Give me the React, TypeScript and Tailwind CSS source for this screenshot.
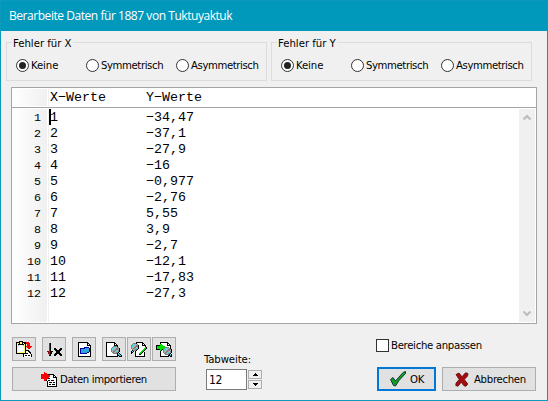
import React from "react";

const UI = "font-['DejaVu_Sans_Condensed','Noto_Sans',sans-serif] [font-stretch:condensed]";

const INK: Record<string, string> = {
  k: "#000000",
  w: "#ffffff",
  r: "#ff0000",
  d: "#a00000",
  y: "#ffff66",
  g: "#808080",
  s: "#b0b0b0",
  b: "#0000a0",
  c: "#2aa5dc",
  t: "#40e0e8",
  l: "#00e000",
};

function Pixels({ rows }: { rows: string[] }) {
  const w = Math.max(...rows.map((r) => r.length));
  return (
    <svg width={w} height={rows.length} viewBox={`0 0 ${w} ${rows.length}`} shapeRendering="crispEdges" className="block shrink-0">
      {rows.flatMap((row, y) =>
        [...row].map((ch, x) => (INK[ch] ? <rect key={`${x}-${y}`} x={x} y={y} width="1" height="1" fill={INK[ch]} /> : null))
      )}
    </svg>
  );
}

const PASTE = [
  "...kkkk.........",
  "kkkkyykkkkrrr...",
  "kyykyykykkrrrr..",
  "kykkkkkkyk.rrr..",
  "kyswwwwsyk.rrr..",
  "kywwwwwwykrrrrrr",
  "kywwwwwwyk.rrrr.",
  "kywwwwwwyk..rr..",
  "kywwwwwwyk......",
  "kywwwwwwykkkk...",
  "kywwwwwwykwwkk..",
  "kyyyyyyyykwwwkk.",
  "kkkkkkkkkkkkwwk.",
  ".......kwwwwwwwk",
  ".......kwkkwkkwk",
  ".......kwwwwwwwk",
];

const DELETE_ROWS = [
  "..rk...........",
  "..rk...........",
  "..rk...........",
  "..rk...........",
  "..rk...........",
  "..rk...kk....kk",
  "..rk...kkk..kkk",
  "..rk....kkkkkk.",
  "ddrkkk...kkkk..",
  ".drkk....kkkk..",
  ".drkk...kkkkkk.",
  "..rk...kkk..kkk",
  "..kk...kk....kk",
];

const OPEN = [
  "kkkkkkkkkk...",
  "kwwwwwwwwkk..",
  "kwwwwwwwwkwk.",
  "kwwwwwwwwkkkk",
  "kwwwwwwwwwwwk",
  "kwwwwwbbbbbwk",
  "kwbbbbbccccbk",
  "kwbccccccccbk",
  "kwbccccccccbk",
  "kwbccccccccbk",
  "kwbccccccbbwk",
  "kwbbbbbbbwwwk",
  "kwwwwwwwwwwwk",
  "kwwwwwwwwwwwk",
  "kkkkkkkkkkkkk",
];

const FIND = [
  "kkkkkkkkk.......",
  "kwwwwwwwkk......",
  "kwwwwwwwkwk.....",
  "kwwwwwwwkkkk....",
  "kwwwwwwggggk....",
  "kwwwwwgttssgg...",
  "kwwwwgttssgggk..",
  "kwwwwgtssgggsk..",
  "kwwwwgssggstgk..",
  "kwwwwgsggsttgk..",
  "kwwwwwggssggk...",
  "kwwwwwwggggktk..",
  "kwwwwwwwwwwkctk.",
  "kwwwwwwwwwwkkctk",
  "kkkkkkkkkkkk.kkk",
];

const REPLACE = [
  ".....kkkkkkk....",
  "..gggkwwwwwkk...",
  ".gttssgwwwwkwk..",
  "gttssggkwwwkkkk.",
  "gtssgggkwwwwwwk.",
  "gssggstkwwwwwwlk",
  "gsggsttkwwwwwllk",
  ".gssggkwwwwwllk.",
  ".kgggkwwwwwllk..",
  "ktk.kwwwwwllk...",
  "kk..kwwwwllkwk..",
  "k...kwwwllkwwk..",
  "....kwwwkkwwwk..",
  "....kwwwwwwwwk..",
  "....kkkkkkkkkk..",
];

const FIND_NEXT = [
  "....kkkkkkkk....",
  "....kwwwwwwkk...",
  "....llwwwwwkwk..",
  "kkkklllwwwwkkkk.",
  "kllllllllwwwwwk.",
  "kllllllllggggwk.",
  "klllllllgttssgk.",
  "kkkkllkgttssgggk",
  "....lkwgtssgggsk",
  "....kwwgssggstgk",
  "....kwwgsggsttgk",
  "....kwwwggssggk.",
  "....kwwwwggggktk",
  "....kwwwwwwwkkck",
  "....kkkkkkkkk.kk",
];

const IMPORT = [
  "...r............",
  "...rrr..........",
  "rrrrrrrkkkkkk...",
  "rrrrrrrrrwwwkk..",
  "rrrrrrrrrwwwkwk.",
  "rrrrrrrrwwwwkkkk",
  "rrrrrrrkkwwwwwwk",
  "...rrrwwwwwwwwwk",
  "...rrkwkkwkkkwwk",
  "......kwwwwwwwwk",
  "......kwkkkwkkwk",
  "......kwwwwwwwwk",
  "......kwkkwkkkwk",
  "......kwwwwwwwwk",
  "......kkkkkkkkkk",
];

function ToolButton({ rows, gap }: { rows: string[]; gap: string }) {
  return (
    <button className={`flex size-6 items-center justify-center border border-[#adadad] bg-[#e1e1e1] ${gap}`}>
      <Pixels rows={rows} />
    </button>
  );
}

function Radio({ label, checked, width, spacing }: { label: string; checked?: boolean; width: string; spacing: string }) {
  return (
    <label className={`flex h-4 items-center ${width}`}>
      <span className="flex size-[13px] shrink-0 items-center justify-center rounded-full border border-[#333] bg-white">
        {checked && <span className="size-[7px] rounded-full bg-[#222]" />}
      </span>
      <span className={`ml-[2px] whitespace-nowrap pt-[2px] leading-4 ${spacing}`}>{label}</span>
    </label>
  );
}

function ErrorGroup({ title }: { title: string }) {
  return (
    <fieldset className="h-[46px] w-[261px]">
      <div className="flex h-[39px] w-full flex-col border border-[#dcdcdc]">
        <legend className="-mt-[8px] ml-[5px] self-start whitespace-nowrap bg-[#f0f0f0] px-[1px] pt-px leading-4">{title}</legend>
        <div className="mt-[5px] flex pl-[9px]">
          <Radio label="Keine" checked width="w-[70px]" spacing="tracking-[-0.1px]" />
          <Radio label="Symmetrisch" width="w-[90px]" spacing="tracking-[-0.4px]" />
          <Radio label="Asymmetrisch" width="w-[84px]" spacing="tracking-[-0.4px]" />
        </div>
      </div>
    </fieldset>
  );
}

const VALUES = ["-34,47", "-37,1", "-27,9", "-16", "-0,977", "-2,76", "5,55", "3,9", "-2,7", "-12,1", "-17,83", "-27,3"];

function Chevron({ down }: { down?: boolean }) {
  return (
    <svg width="8" height="7" viewBox="0 0 8 7" className={down ? "rotate-180" : ""}>
      <path d="M.5 5.5 4 2 7.5 5.5" fill="none" stroke="#bcbcbc" strokeWidth="2.2" />
    </svg>
  );
}

function Editor() {
  return (
    <div className="flex h-[237px] w-[526px] flex-col border border-[#a5a5a5] bg-white font-['Liberation_Mono',monospace] text-[13.333px] text-black">
      <div className="flex h-[20px] shrink-0 border-b border-[#a5a5a5] p-px">
        <div className="w-[34px] shrink-0 bg-linear-to-r from-white to-[#f0f0f0]" />
        <div className="ml-px w-[98px] shrink-0 border-l border-[#f0f0f0] pl-px leading-[17px]">X−Werte</div>
        <div className="leading-[17px]">Y−Werte</div>
      </div>
      <div className="flex min-h-0 flex-1 p-px">
        <div className="w-[34px] bg-linear-to-r from-white to-[#f0f0f0] pr-[6px] text-right text-[11.667px]">
          {VALUES.map((_, i) => (
            <div key={i} className="h-4 leading-[18px]">{i + 1}</div>
          ))}
        </div>
        <div className="ml-px w-[473px] border-l border-[#f0f0f0]">
          {VALUES.map((v, i) => (
            <div key={i} className="flex h-4 leading-[18px]">
              <span className={`w-[97px] ${i === 0 ? "border-l-2 border-black -indent-px" : "pl-px"}`}>{i + 1}</span>
              <span>{v.replace("-", "−")}</span>
            </div>
          ))}
        </div>
        <div className="flex w-4 flex-col items-center justify-between bg-[#f0f0f0] py-[5px]">
          <Chevron />
          <Chevron down />
        </div>
      </div>
    </div>
  );
}

function Spin({ down }: { down?: boolean }) {
  return (
    <div className="flex h-[9px] w-[14px] items-center justify-center border border-[#adadad] bg-[#f0f0f0]">
      <svg width="5" height="3" viewBox="0 0 5 3" shapeRendering="crispEdges">
        <path d={down ? "M0 0h5v1H4v1H3v1H2V2H1V1H0z" : "M2 0h1v1h1v1h1v1H0V2h1V1h1z"} />
      </svg>
    </div>
  );
}

export default function App() {
  return (
    <div className={`flex h-[401px] w-[548px] flex-col border border-[#0b9abc] bg-[#f0f0f0] text-[11.25px] text-black ${UI}`}>
      <div className="flex h-[30px] shrink-0 items-center bg-[#0099bc] pl-2 font-['Open_Sans','Noto_Sans',sans-serif] text-[12px] tracking-[-0.45px] text-white [font-stretch:normal]">
        Berarbeite Daten für 1887 von Tuktuyaktuk
      </div>
      <div className="mt-[11px] flex gap-1 pl-[5px]">
        <ErrorGroup title="Fehler für X" />
        <ErrorGroup title="Fehler für Y" />
      </div>
      <div className="-mt-px pl-[10px]">
        <Editor />
      </div>
      <div className="mt-[13px] flex pl-[11px]">
        <div className="w-[164px]">
          <div className="flex">
            <ToolButton rows={PASTE} gap="" />
            <ToolButton rows={DELETE_ROWS} gap="ml-[6px]" />
            <ToolButton rows={OPEN} gap="ml-[6px]" />
            <ToolButton rows={FIND} gap="ml-[6px]" />
            <ToolButton rows={REPLACE} gap="ml-px" />
            <ToolButton rows={FIND_NEXT} gap="ml-px" />
          </div>
          <button className="mt-[6px] flex h-6 w-full items-center border border-[#adadad] bg-[#e1e1e1] pl-7">
            <Pixels rows={IMPORT} />
            <span className="ml-[3px] whitespace-nowrap pt-[2px] tracking-[-0.35px]">Daten importieren</span>
          </button>
        </div>
        <div className="ml-7 w-[60px] pt-[15px]">
          <div className="h-[17px] leading-4 tracking-[-0.1px]">Tabweite:</div>
          <div className="ml-[2px] flex">
            <div className="h-[21px] w-[41px] border border-[#7a7a7a] bg-white pl-[2px] text-[12px] leading-[20px] tracking-[-0.3px]">12</div>
            <div className="ml-px flex flex-col gap-px pt-px">
              <Spin />
              <Spin down />
            </div>
          </div>
        </div>
        <div className="ml-[112px]">
          <label className="flex h-4 items-center">
            <span className="size-[13px] border border-[#333] bg-white" />
            <span className="ml-[2px] pt-[2px] tracking-[-0.3px]">Bereiche anpassen</span>
          </label>
          <div className="mt-[14px] ml-px flex gap-[6px]">
            <button className="flex h-6 w-[59px] items-center border-2 border-[#0078d7] bg-[#e1e1e1] pl-[11px]">
              <svg width="16" height="16" viewBox="0 0 16 16" className="shrink-0">
                <path d="M.5 8.5 3 6.5 5.5 10 13 1.5 15.5.5 15.5 2.5 9 9.5 5.5 15 3.5 14.5z" fill="#0fa01c" stroke="#10283c" strokeWidth=".9" />
              </svg>
              <span className="ml-1 pt-[2px] tracking-[-0.2px]">OK</span>
            </button>
            <button className="flex h-6 w-[94px] items-center border border-[#adadad] bg-[#e1e1e1] pl-3">
              <svg width="14" height="15" viewBox="0 0 14 15" className="shrink-0">
                <path d="M1 2.5 4 1 7 4.8 10.5.8 13 1.5 12.5 4 9.3 7.5 12.8 12 11 14.2 9 13.8 6.2 10.2 3 14.2.8 13.5 1 11.2 4.2 7.5z" fill="#a30c10" stroke="#5e0000" strokeWidth=".8" />
              </svg>
              <span className="ml-[5px] pt-[2px] tracking-[-0.3px]">Abbrechen</span>
            </button>
          </div>
        </div>
      </div>
    </div>
  );
}
